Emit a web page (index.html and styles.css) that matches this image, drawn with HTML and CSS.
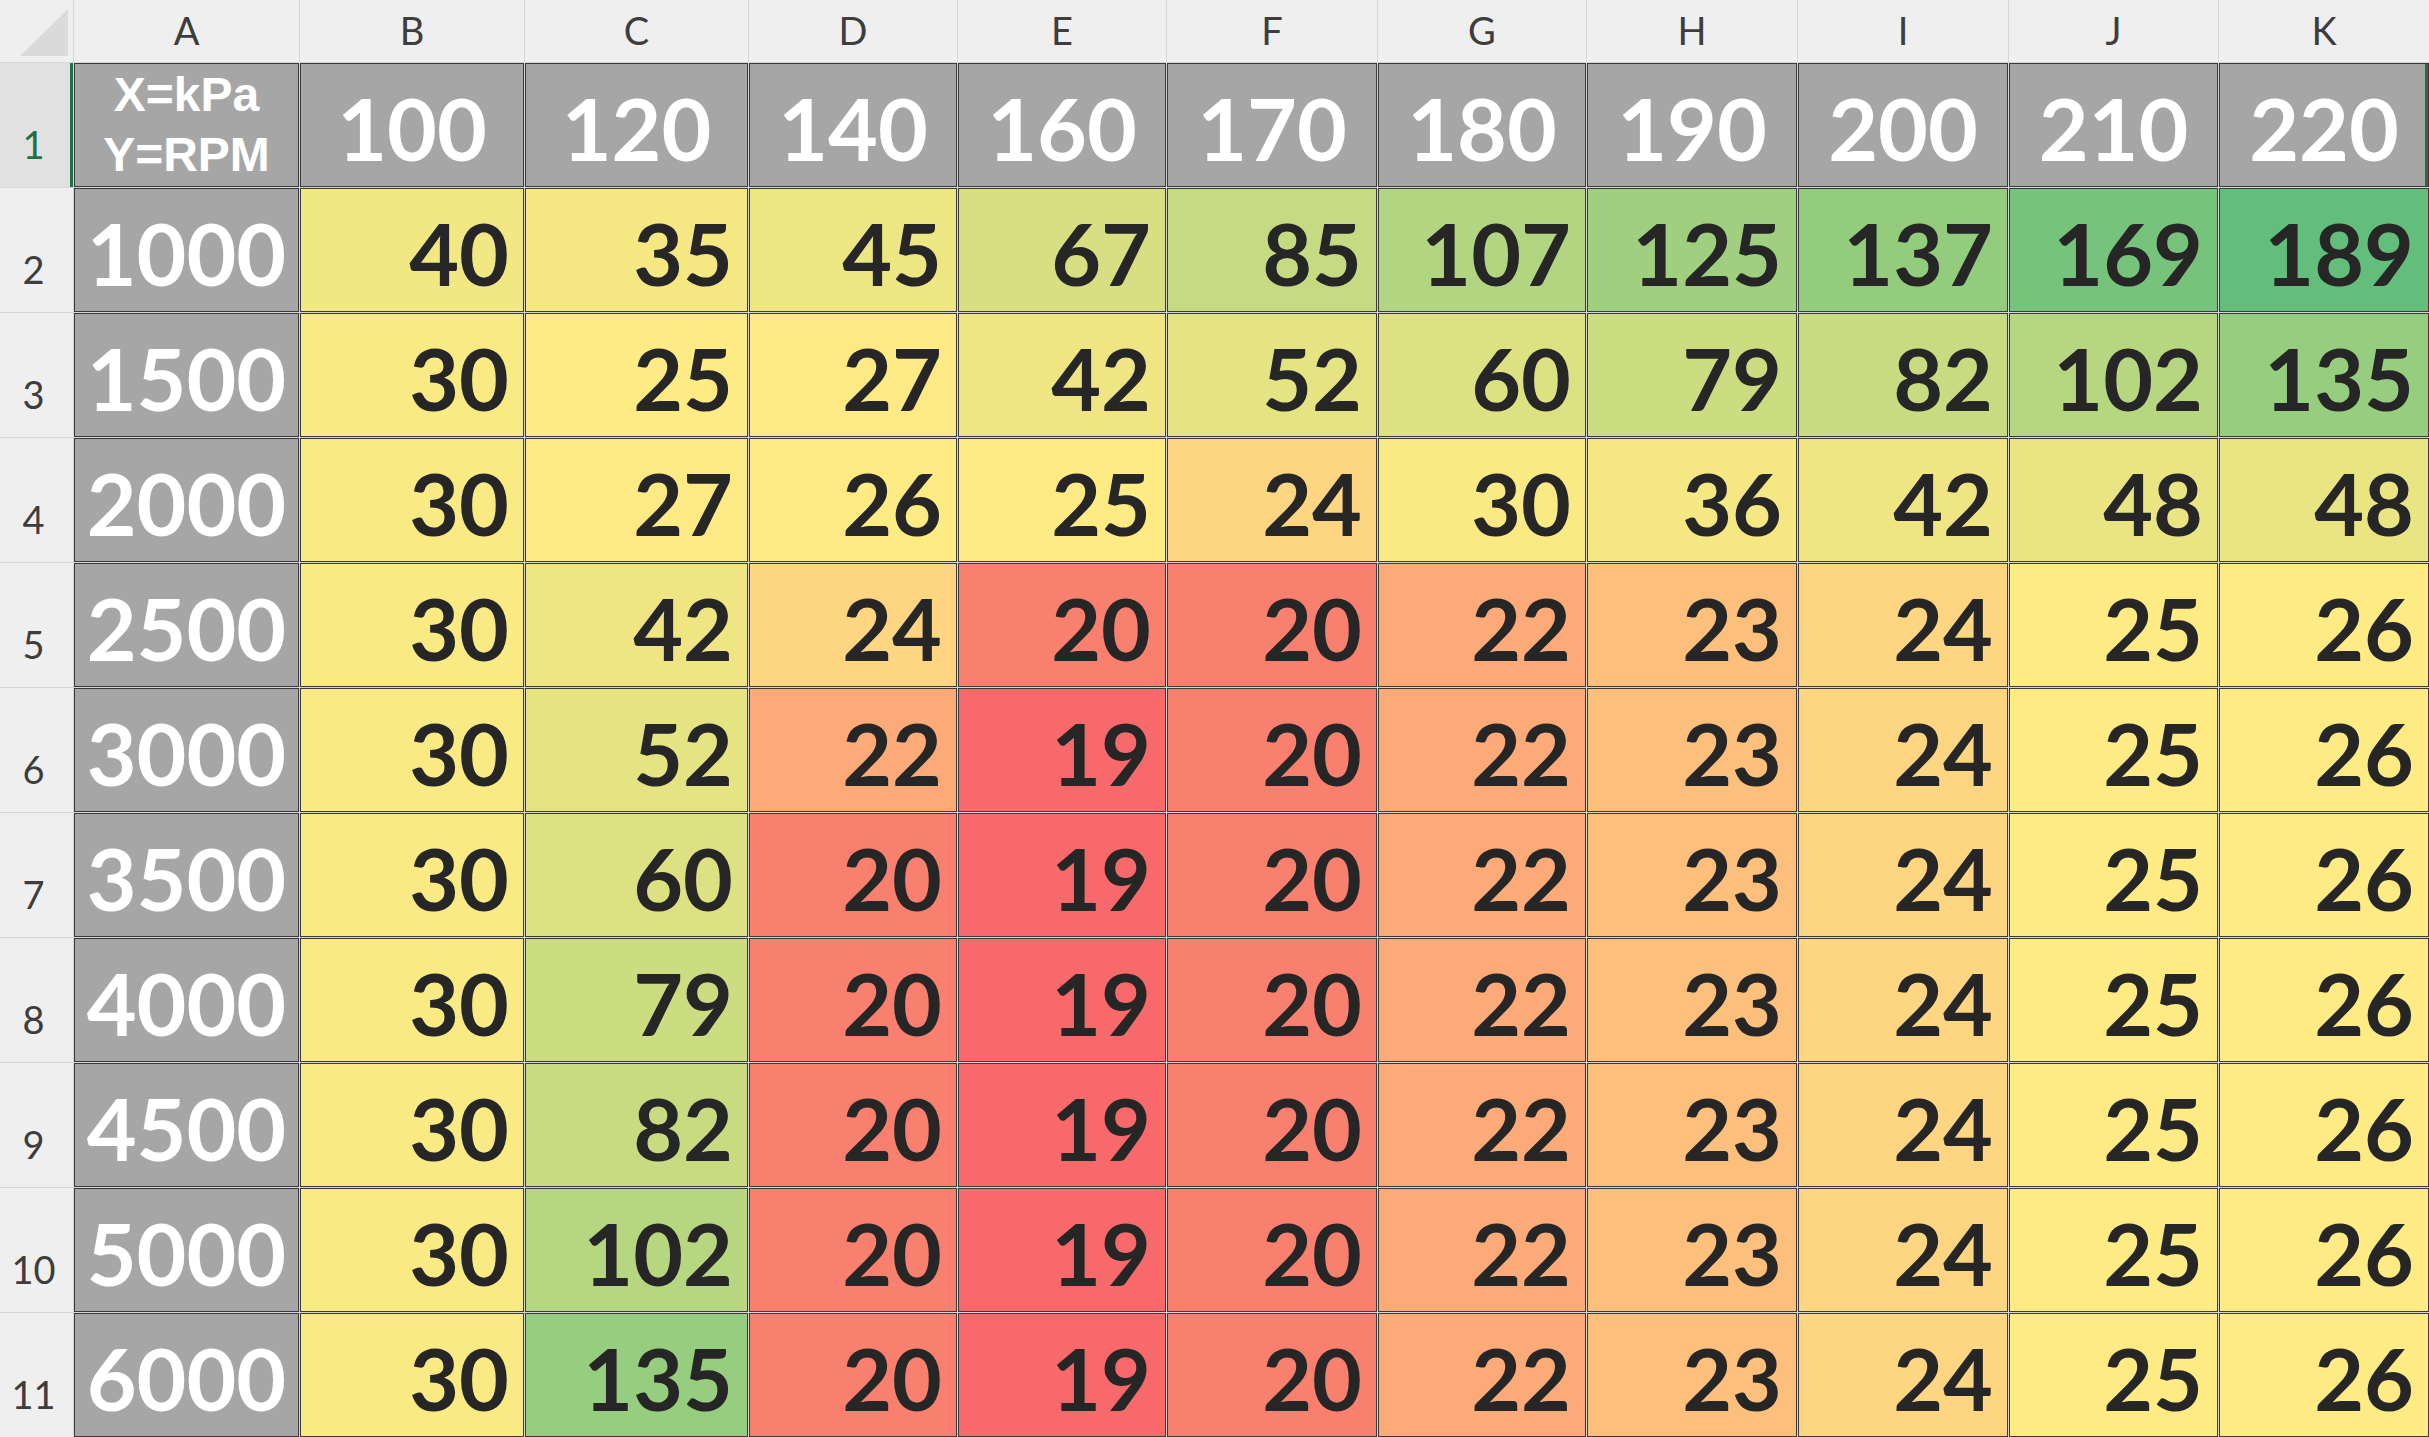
FILE: index.html
```html
<!DOCTYPE html>
<html lang="en">
<head>
<meta charset="utf-8">
<title>Boost table</title>
<link rel="stylesheet" href="styles.css">
</head>
<body>
<div class="sheet">
  <div class="corner"><span class="tri"></span></div>
  <div class="colhead">A</div><div class="colhead">B</div><div class="colhead">C</div><div class="colhead">D</div><div class="colhead">E</div><div class="colhead">F</div><div class="colhead">G</div><div class="colhead">H</div><div class="colhead">I</div><div class="colhead">J</div><div class="colhead">K</div>

  <div class="rowhead sel">1</div>
  <div class="cell axis"><span>X=kPa</span><span>Y=RPM</span></div>
  <div class="cell hdr">100</div><div class="cell hdr">120</div><div class="cell hdr">140</div><div class="cell hdr">160</div><div class="cell hdr">170</div><div class="cell hdr">180</div><div class="cell hdr">190</div><div class="cell hdr">200</div><div class="cell hdr">210</div><div class="cell hdr last">220</div>

  <div class="rowhead">2</div>
  <div class="cell hdr">1000</div>
  <div class="cell num c40">40</div><div class="cell num c35">35</div><div class="cell num c45">45</div><div class="cell num c67">67</div><div class="cell num c85">85</div><div class="cell num c107">107</div><div class="cell num c125">125</div><div class="cell num c137">137</div><div class="cell num c169">169</div><div class="cell num c189">189</div>

  <div class="rowhead">3</div>
  <div class="cell hdr">1500</div>
  <div class="cell num c30">30</div><div class="cell num c25">25</div><div class="cell num c27">27</div><div class="cell num c42">42</div><div class="cell num c52">52</div><div class="cell num c60">60</div><div class="cell num c79">79</div><div class="cell num c82">82</div><div class="cell num c102">102</div><div class="cell num c135">135</div>

  <div class="rowhead">4</div>
  <div class="cell hdr">2000</div>
  <div class="cell num c30">30</div><div class="cell num c27">27</div><div class="cell num c26">26</div><div class="cell num c25">25</div><div class="cell num c24">24</div><div class="cell num c30">30</div><div class="cell num c36">36</div><div class="cell num c42">42</div><div class="cell num c48">48</div><div class="cell num c48">48</div>

  <div class="rowhead">5</div>
  <div class="cell hdr">2500</div>
  <div class="cell num c30">30</div><div class="cell num c42">42</div><div class="cell num c24">24</div><div class="cell num c20">20</div><div class="cell num c20">20</div><div class="cell num c22">22</div><div class="cell num c23">23</div><div class="cell num c24">24</div><div class="cell num c25">25</div><div class="cell num c26">26</div>

  <div class="rowhead">6</div>
  <div class="cell hdr">3000</div>
  <div class="cell num c30">30</div><div class="cell num c52">52</div><div class="cell num c22">22</div><div class="cell num c19">19</div><div class="cell num c20">20</div><div class="cell num c22">22</div><div class="cell num c23">23</div><div class="cell num c24">24</div><div class="cell num c25">25</div><div class="cell num c26">26</div>

  <div class="rowhead">7</div>
  <div class="cell hdr">3500</div>
  <div class="cell num c30">30</div><div class="cell num c60">60</div><div class="cell num c20">20</div><div class="cell num c19">19</div><div class="cell num c20">20</div><div class="cell num c22">22</div><div class="cell num c23">23</div><div class="cell num c24">24</div><div class="cell num c25">25</div><div class="cell num c26">26</div>

  <div class="rowhead">8</div>
  <div class="cell hdr">4000</div>
  <div class="cell num c30">30</div><div class="cell num c79">79</div><div class="cell num c20">20</div><div class="cell num c19">19</div><div class="cell num c20">20</div><div class="cell num c22">22</div><div class="cell num c23">23</div><div class="cell num c24">24</div><div class="cell num c25">25</div><div class="cell num c26">26</div>

  <div class="rowhead">9</div>
  <div class="cell hdr">4500</div>
  <div class="cell num c30">30</div><div class="cell num c82">82</div><div class="cell num c20">20</div><div class="cell num c19">19</div><div class="cell num c20">20</div><div class="cell num c22">22</div><div class="cell num c23">23</div><div class="cell num c24">24</div><div class="cell num c25">25</div><div class="cell num c26">26</div>

  <div class="rowhead">10</div>
  <div class="cell hdr">5000</div>
  <div class="cell num c30">30</div><div class="cell num c102">102</div><div class="cell num c20">20</div><div class="cell num c19">19</div><div class="cell num c20">20</div><div class="cell num c22">22</div><div class="cell num c23">23</div><div class="cell num c24">24</div><div class="cell num c25">25</div><div class="cell num c26">26</div>

  <div class="rowhead">11</div>
  <div class="cell hdr">6000</div>
  <div class="cell num c30">30</div><div class="cell num c135">135</div><div class="cell num c20">20</div><div class="cell num c19">19</div><div class="cell num c20">20</div><div class="cell num c22">22</div><div class="cell num c23">23</div><div class="cell num c24">24</div><div class="cell num c25">25</div><div class="cell num c26">26</div>
</div>
</body>
</html>
```
FILE: styles.css
```css
html, body {
  margin: 0;
  padding: 0;
  background: #ffffff;
  overflow: hidden;
}

.sheet {
  display: grid;
  grid-template-columns: 73px 225px 224px 223px 208px 208px 210px 208px 210px 210px 209px 210px;
  grid-template-rows: 62px repeat(11, 124px);
  gap: 1px;
  background: #d6d6d6;
  width: 2429px;
  height: 1437px;
}

.corner {
  background: #efefef;
  position: relative;
}

.tri {
  position: absolute;
  right: 5px;
  bottom: 6px;
  width: 48px;
  height: 47px;
  background: #dadada;
  clip-path: polygon(100% 0, 100% 100%, 0 100%);
}

.colhead {
  background: #efefef;
  color: #3d3d3d;
  font-family: Lato, "Open Sans", sans-serif;
  font-size: 38px;
  font-weight: 400;
  line-height: 1;
  display: flex;
  align-items: flex-end;
  justify-content: center;
  box-sizing: border-box;
  padding-bottom: 13px;
}

.rowhead {
  background: #efefef;
  color: #3d3d3d;
  font-family: Lato, "Open Sans", sans-serif;
  font-size: 38px;
  font-weight: 400;
  line-height: 1;
  display: flex;
  align-items: flex-end;
  justify-content: center;
  box-sizing: border-box;
  padding-bottom: 24px;
  padding-right: 6px;
}

.rowhead.sel {
  background: #e1e1e1;
  color: #217346;
  box-shadow: inset -3px 0 0 #217346;
}

.cell {
  box-sizing: border-box;
  border: 1px solid #3a3a3a;
  font-family: Lato, "Open Sans", sans-serif;
  font-size: 86px;
  font-weight: 700;
  line-height: 1;
  display: flex;
  align-items: center;
  padding-top: 6px;
}

.hdr {
  background: #a6a6a6;
  color: #ffffff;
  justify-content: center;
}

.hdr.last {
  box-shadow: inset -3px 0 0 #217346;
}

.axis {
  background: #a6a6a6;
  color: #ffffff;
  flex-direction: column;
  justify-content: center;
  align-items: center;
  font-family: "Liberation Sans", Arial, sans-serif;
  font-size: 48px;
  font-weight: 700;
  line-height: 60px;
  padding-top: 0;
}

.num {
  justify-content: flex-end;
  padding-right: 14px;
  color: #262626;
}

.c19 { background: #f8696b; }
.c20 { background: #f97f6f; }
.c22 { background: #fcaa78; }
.c23 { background: #fdc07c; }
.c24 { background: #fed580; }
.c25 { background: #ffeb84; }
.c26 { background: #feeb84; }
.c27 { background: #fdea84; }
.c30 { background: #faea84; }
.c35 { background: #f5e883; }
.c36 { background: #f5e883; }
.c40 { background: #f1e783; }
.c42 { background: #efe683; }
.c45 { background: #ece683; }
.c48 { background: #e9e583; }
.c52 { background: #e5e483; }
.c60 { background: #dee182; }
.c67 { background: #d7df82; }
.c79 { background: #ccdc81; }
.c82 { background: #c9db81; }
.c85 { background: #c6db81; }
.c102 { background: #b6d680; }
.c107 { background: #b1d580; }
.c125 { background: #a0d07f; }
.c135 { background: #96cd7e; }
.c137 { background: #94cc7e; }
.c169 { background: #76c37c; }
.c189 { background: #63be7b; }
```
